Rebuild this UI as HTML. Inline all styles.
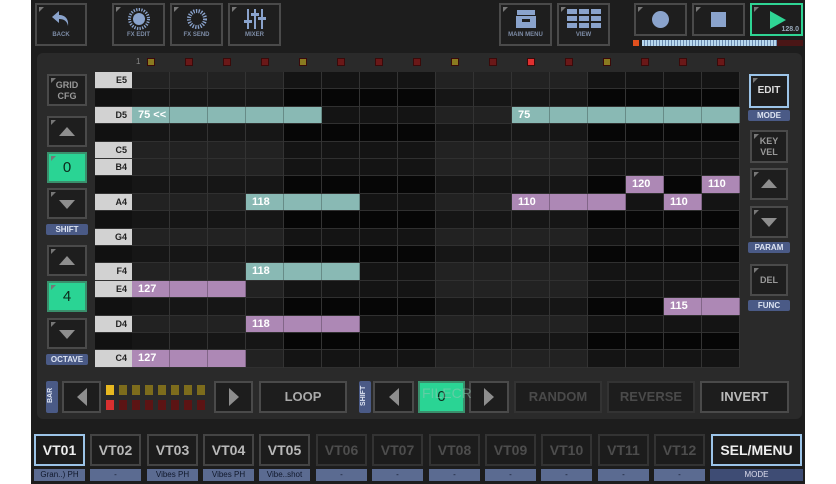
<!DOCTYPE html><html><head><meta charset="utf-8"><style>
*{margin:0;padding:0;box-sizing:border-box}
body{width:836px;height:484px;background:#fff;position:relative;overflow:hidden;font-family:"Liberation Sans",sans-serif;font-weight:bold}
.a{position:absolute}
#app{left:31px;top:0;width:774px;height:484px;background:#1d1d1d}
.btn{position:absolute;border:2px solid #4a4a4a;background:#1e1e1e;color:#7c8aa0;text-align:center}
.btn::before{content:"";position:absolute;left:2px;top:2px;border-left:5px solid #777;border-bottom:5px solid transparent}
.tb{font-size:6px;color:#7d8ca6}
.g{background:#2ad494;border-color:#3a8f6c;color:#0b2a1c;font-size:15px;font-weight:normal;display:flex;align-items:center;justify-content:center}
.lbl{position:absolute;background:#4a5a86;color:#dde4f2;font-size:8px;text-align:center;line-height:11px;border-radius:2px}
.tri{width:0;height:0;position:absolute;left:50%;top:50%}
.up{border-left:8px solid transparent;border-right:8px solid transparent;border-bottom:9px solid #8e8e8e;transform:translate(-50%,-55%)}
.dn{border-left:8px solid transparent;border-right:8px solid transparent;border-top:9px solid #8e8e8e;transform:translate(-50%,-45%)}
.lf{border-top:9px solid transparent;border-bottom:9px solid transparent;border-right:10px solid #8e8e8e;transform:translate(-50%,-50%)}
.rt{border-top:9px solid transparent;border-bottom:9px solid transparent;border-left:10px solid #8e8e8e;transform:translate(-50%,-50%)}
.row{position:absolute;left:132px;width:608px;height:17.4px;border-bottom:1px solid #303030;
background:linear-gradient(90deg,var(--a) 0 152px,var(--b) 152px 304px,var(--a) 304px 456px,var(--b) 456px 608px)}
.w{--a:#222;--b:#141414}.k{--a:#161616;--b:#060606}
.key{position:absolute;left:95px;width:37px;height:16.4px;font-size:9px;text-align:right;padding-right:5px;line-height:16px}
.kw{background:#d2d2d2;color:#222}.kb{background:#111}
.vl{position:absolute;left:132px;width:608px;top:0;height:17.4px;
background:repeating-linear-gradient(90deg,transparent 0 37px,#333 37px 38px)}
.n{position:absolute;height:16.4px;color:#fff;font-size:11px;line-height:16px;padding-left:6px;
background-image:repeating-linear-gradient(90deg,transparent 0 37px,rgba(0,0,0,.25) 37px 38px)}
.t{background-color:#89b9b4}.p{background-color:#ad88b5}
.mk{position:absolute;top:58px;width:8px;height:8px;background:#6a1818;border:1px solid #3a0a0a}
.vt{position:absolute;top:434px;width:51px;height:32px;border:2px solid #444;background:#1c1c1c;color:#b9b9b9;font-size:14px;text-align:center;line-height:28px}
.vt.d{color:#4d4d4d;border-color:#333}
.vl2{position:absolute;top:469px;width:51px;height:12px;background:#5b6b91;color:#10182c;font-size:8px;text-align:center;line-height:12px;font-weight:normal}
.bb{position:absolute;top:381px;height:32px;border:2px solid #4a4a4a;background:#1d1d1d;color:#aaa;font-size:13px;text-align:center;line-height:28px}
</style></head><body>
<div id="app" class="a"></div>
<!-- top buttons -->
<div class="btn tb" style="left:35px;top:3px;width:52px;height:43px;"><svg width="22" height="20" viewBox="0 0 22 20" style="margin-top:4px"><path d="M9 2 L2 8 L9 14 L9 10 C14 10 17 12 18 17 C19 10 15 6 9 6 Z" fill="#8aa3cc"/></svg><div style="margin-top:1px">BACK</div></div>
<div class="btn tb" style="left:112px;top:3px;width:53px;height:43px;"><svg width="22" height="22" viewBox="0 0 22 22" style="margin-top:3px"><circle cx="11" cy="11" r="6" fill="#8aa3cc"/><circle cx="11" cy="11" r="9.5" fill="none" stroke="#8aa3cc" stroke-width="3" stroke-dasharray="1.3 1.3"/></svg><div>FX EDIT</div></div>
<div class="btn tb" style="left:170px;top:3px;width:53px;height:43px;"><svg width="22" height="22" viewBox="0 0 22 22" style="margin-top:3px"><circle cx="11" cy="11" r="8" fill="none" stroke="#8aa3cc" stroke-width="4" stroke-dasharray="1.3 1.3"/></svg><div>FX SEND</div></div>
<div class="btn tb" style="left:228px;top:3px;width:53px;height:43px;"><svg width="22" height="22" viewBox="0 0 22 22" style="margin-top:3px" fill="#8aa3cc"><rect x="3" y="1" width="2" height="20"/><rect x="10" y="1" width="2" height="20"/><rect x="17" y="1" width="2" height="20"/><rect x="0" y="12" width="8" height="3"/><rect x="7" y="5" width="8" height="3"/><rect x="14" y="9" width="8" height="3"/></svg><div>MIXER</div></div>
<div class="btn tb" style="left:499px;top:3px;width:53px;height:43px;"><svg width="22" height="20" viewBox="0 0 22 20" style="margin-top:4px" fill="#8aa3cc"><rect x="2" y="1" width="18" height="5"/><rect x="1" y="7" width="20" height="12"/><rect x="7" y="10" width="8" height="3" fill="#1e1e1e"/></svg><div style="margin-top:1px">MAIN MENU</div></div>
<div class="btn tb" style="left:557px;top:3px;width:53px;height:43px;"><svg width="34" height="20" viewBox="0 0 34 20" style="margin-top:4px" fill="#8aa3cc"><rect x="0" y="0" width="10" height="5"/><rect x="12" y="0" width="10" height="5"/><rect x="24" y="0" width="10" height="5"/><rect x="0" y="7" width="10" height="5"/><rect x="12" y="7" width="10" height="5"/><rect x="24" y="7" width="10" height="5"/><rect x="0" y="14" width="10" height="5"/><rect x="12" y="14" width="10" height="5"/><rect x="24" y="14" width="10" height="5"/></svg><div style="margin-top:1px">VIEW</div></div>
<div class="btn" style="left:634px;top:3px;width:53px;height:33px;"><div style="width:17px;height:17px;border-radius:50%;background:#8aa3cc;margin:6px auto"></div></div>
<div class="btn" style="left:692px;top:3px;width:53px;height:33px;"><div style="width:15px;height:15px;background:#8aa3cc;margin:7px auto"></div></div>
<div class="btn" style="left:750px;top:3px;width:53px;height:33px;border-color:#2fd494"><div class="a" style="left:18px;top:6px;border-top:9px solid transparent;border-bottom:9px solid transparent;border-left:16px solid #2fd494"></div><div class="a" style="right:2px;bottom:1px;font-size:7px;color:#9ab">128.0</div></div>
<div class="a" style="left:633px;top:40px;width:6px;height:6px;background:#e0501e"></div>
<div class="a" style="left:642px;top:40px;width:135px;height:6px;background:repeating-linear-gradient(90deg,#b8d8ee 0 2px,#6d8cb0 2px 3px)"></div>
<div class="a" style="left:777px;top:40px;width:26px;height:6px;background:#4a1616"></div>
<!-- inner panel -->
<div class="a" style="left:37px;top:53px;width:765px;height:366px;background:#2a2a2a;border-radius:6px"></div>
<div class="a" style="left:136px;top:57px;font-size:8px;color:#888;font-weight:normal">1</div>
<div class="mk" style="left:147px;background:#8a7a20"></div><div class="mk" style="left:185px"></div><div class="mk" style="left:223px"></div><div class="mk" style="left:261px"></div>
<div class="mk" style="left:299px;background:#8a7a20"></div><div class="mk" style="left:337px"></div><div class="mk" style="left:375px"></div><div class="mk" style="left:413px"></div>
<div class="mk" style="left:451px;background:#8a7a20"></div><div class="mk" style="left:489px"></div><div class="mk" style="left:527px;background:#e03030"></div><div class="mk" style="left:565px"></div>
<div class="mk" style="left:603px;background:#8a7a20"></div><div class="mk" style="left:641px"></div><div class="mk" style="left:679px"></div><div class="mk" style="left:717px"></div>
<!-- grid rows -->
<div class="a" style="left:95px;top:72px;width:645px;height:296px;background:#333"></div>
<div class="row w" style="top:72px"></div><div class="row k" style="top:89.4px"></div><div class="row w" style="top:106.8px"></div><div class="row k" style="top:124.2px"></div>
<div class="row w" style="top:141.6px"></div><div class="row w" style="top:159px"></div><div class="row k" style="top:176.4px"></div><div class="row w" style="top:193.8px"></div>
<div class="row k" style="top:211.2px"></div><div class="row w" style="top:228.6px"></div><div class="row k" style="top:246px"></div><div class="row w" style="top:263.4px"></div>
<div class="row w" style="top:280.8px"></div><div class="row k" style="top:298.2px"></div><div class="row w" style="top:315.6px"></div><div class="row k" style="top:333px"></div><div class="row w" style="top:350.4px"></div>
<div class="vl" style="top:72px;height:296px"></div>
<div class="key kw" style="top:72px">E5</div><div class="key kb" style="top:89.4px"></div><div class="key kw" style="top:106.8px">D5</div><div class="key kb" style="top:124.2px"></div>
<div class="key kw" style="top:141.6px">C5</div><div class="key kw" style="top:159px">B4</div><div class="key kb" style="top:176.4px"></div><div class="key kw" style="top:193.8px">A4</div>
<div class="key kb" style="top:211.2px"></div><div class="key kw" style="top:228.6px">G4</div><div class="key kb" style="top:246px"></div><div class="key kw" style="top:263.4px">F4</div>
<div class="key kw" style="top:280.8px">E4</div><div class="key kb" style="top:298.2px"></div><div class="key kw" style="top:315.6px">D4</div><div class="key kb" style="top:333px"></div><div class="key kw" style="top:350.4px">C4</div>
<!-- notes -->
<div class="n t" style="left:132px;top:106.8px;width:190px">75 &lt;&lt;</div>
<div class="n t" style="left:512px;top:106.8px;width:228px">75</div>
<div class="n p" style="left:626px;top:176.4px;width:38px">120</div>
<div class="n p" style="left:702px;top:176.4px;width:38px">110</div>
<div class="n t" style="left:246px;top:193.8px;width:114px">118</div>
<div class="n p" style="left:512px;top:193.8px;width:114px">110</div>
<div class="n p" style="left:664px;top:193.8px;width:38px">110</div>
<div class="n t" style="left:246px;top:263.4px;width:114px">118</div>
<div class="n p" style="left:132px;top:280.8px;width:114px">127</div>
<div class="n p" style="left:664px;top:298.2px;width:76px">115</div>
<div class="n p" style="left:246px;top:315.6px;width:114px">118</div>
<div class="n p" style="left:132px;top:350.4px;width:114px">127</div>
<!-- left controls -->
<div class="btn" style="left:47px;top:74px;width:40px;height:32px;color:#999;font-size:9px;line-height:11px;padding-top:4px">GRID<br>CFG</div>
<div class="btn" style="left:47px;top:116px;width:40px;height:31px"><div class="tri up"></div></div>
<div class="btn g" style="left:47px;top:152px;width:40px;height:31px">0</div>
<div class="btn" style="left:47px;top:188px;width:40px;height:31px"><div class="tri dn"></div></div>
<div class="lbl" style="left:46px;top:224px;width:42px">SHIFT</div>
<div class="btn" style="left:47px;top:245px;width:40px;height:31px"><div class="tri up"></div></div>
<div class="btn g" style="left:47px;top:281px;width:40px;height:31px">4</div>
<div class="btn" style="left:47px;top:318px;width:40px;height:31px"><div class="tri dn"></div></div>
<div class="lbl" style="left:46px;top:354px;width:42px">OCTAVE</div>
<!-- right controls -->
<div class="btn" style="left:749px;top:74px;width:40px;height:34px;border-color:#9cc4e8;color:#ddd;font-size:10px;line-height:30px">EDIT</div>
<div class="lbl" style="left:748px;top:110px;width:42px">MODE</div>
<div class="btn" style="left:750px;top:130px;width:38px;height:33px;color:#999;font-size:9px;line-height:11px;padding-top:4px">KEY<br>VEL</div>
<div class="btn" style="left:750px;top:168px;width:38px;height:32px"><div class="tri up"></div></div>
<div class="btn" style="left:750px;top:206px;width:38px;height:32px"><div class="tri dn"></div></div>
<div class="lbl" style="left:748px;top:242px;width:42px">PARAM</div>
<div class="btn" style="left:750px;top:264px;width:38px;height:32px;color:#999;font-size:9px;line-height:28px">DEL</div>
<div class="lbl" style="left:748px;top:300px;width:42px">FUNC</div>
<!-- bottom row -->
<div class="lbl" style="left:46px;top:381px;width:12px;height:32px;font-size:7px;line-height:10px;padding-top:3px;writing-mode:vertical-rl;transform:rotate(180deg)">BAR</div>
<div class="bb" style="left:62px;width:39px"><div class="tri lf"></div></div>
<div class="a" style="left:106px;top:385px;width:104px;height:10px;background:repeating-linear-gradient(90deg,#7d6c1c 0 8px,transparent 8px 13px)"></div>
<div class="a" style="left:106px;top:385px;width:8px;height:10px;background:#e8b820"></div>
<div class="a" style="left:106px;top:400px;width:104px;height:10px;background:repeating-linear-gradient(90deg,#5c1414 0 8px,transparent 8px 13px)"></div>
<div class="a" style="left:106px;top:400px;width:8px;height:10px;background:#d83030"></div>
<div class="bb" style="left:214px;width:39px"><div class="tri rt"></div></div>
<div class="bb" style="left:259px;width:88px;color:#aaa">LOOP</div>
<div class="lbl" style="left:359px;top:381px;width:12px;height:32px;font-size:7px;line-height:10px;padding-top:2px;writing-mode:vertical-rl;transform:rotate(180deg)">SHIFT</div>
<div class="bb" style="left:373px;width:41px"><div class="tri lf"></div></div>
<div class="bb" style="left:418px;width:47px;background:#2ad494;border-color:#3a8f6c;color:#0b2a1c;font-size:15px;font-weight:normal">0</div>
<div class="bb" style="left:469px;width:40px"><div class="tri rt"></div></div>
<div class="a" style="left:422px;top:385px;font-size:14px;color:rgba(150,200,180,.5);font-weight:normal">FILECR</div>
<div class="bb" style="left:514px;width:88px;color:#4a4a4a;border-color:#333">RANDOM</div>
<div class="bb" style="left:607px;width:88px;color:#4a4a4a;border-color:#333">REVERSE</div>
<div class="bb" style="left:700px;width:89px;color:#bbb">INVERT</div>
<!-- tracks -->
<div class="vt" style="left:34px;border-color:#9cc4e8;color:#eee">VT01</div><div class="vl2" style="left:34px">Gran..) PH</div>
<div class="vt" style="left:90px">VT02</div><div class="vl2" style="left:90px">-</div>
<div class="vt" style="left:147px">VT03</div><div class="vl2" style="left:147px">Vibes PH</div>
<div class="vt" style="left:203px">VT04</div><div class="vl2" style="left:203px">Vibes PH</div>
<div class="vt" style="left:259px">VT05</div><div class="vl2" style="left:259px">Vibe..shot</div>
<div class="vt d" style="left:316px">VT06</div><div class="vl2" style="left:316px">-</div>
<div class="vt d" style="left:372px">VT07</div><div class="vl2" style="left:372px">-</div>
<div class="vt d" style="left:429px">VT08</div><div class="vl2" style="left:429px">-</div>
<div class="vt d" style="left:485px">VT09</div><div class="vl2" style="left:485px">-</div>
<div class="vt d" style="left:541px">VT10</div><div class="vl2" style="left:541px">-</div>
<div class="vt d" style="left:598px">VT11</div><div class="vl2" style="left:598px">-</div>
<div class="vt d" style="left:654px">VT12</div><div class="vl2" style="left:654px">-</div>
<div class="vt" style="left:711px;width:91px;border-color:#9cc4e8;color:#eee">SEL/MENU</div><div class="vl2" style="left:710px;width:93px;background:#3e4c74;color:#dde">MODE</div>
</body></html>
